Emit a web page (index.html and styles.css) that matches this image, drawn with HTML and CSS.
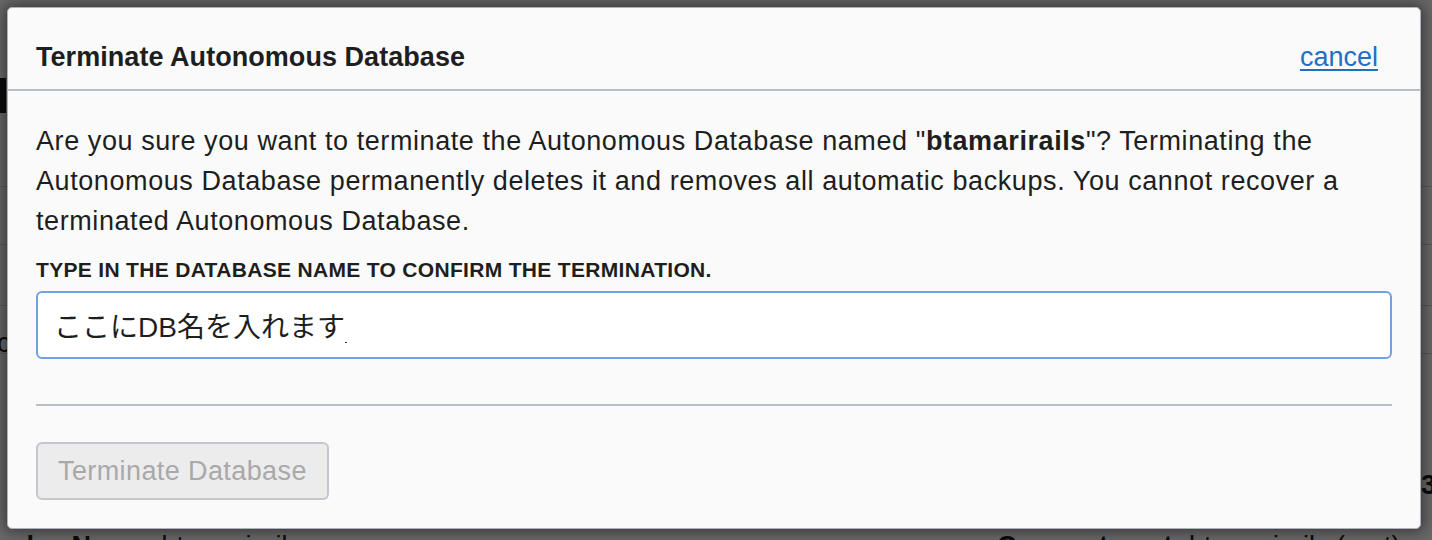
FILE: index.html
```html
<!DOCTYPE html>
<html lang="en">
<head>
<meta charset="utf-8">
<title>Terminate Autonomous Database</title>
<link rel="stylesheet" href="styles.css">
</head>
<body>
<div class="page">
  <div class="page-top"></div>
  <div class="page-hero"><div class="tile"></div></div>
  <div class="page-band band-a"></div>
  <div class="page-band band-b"><span class="frag frag-faint">o</span></div>
  <div class="page-band band-c"></div>
  <div class="page-band band-d"><span class="frag">nc</span></div>
  <div class="page-band band-e"><span class="frag">o</span><span class="frag-right">13:3</span></div>
  <div class="info">
    <div class="info-col"><b>Display Name:</b> btamarirails</div>
    <div class="info-col info-right"><b>Compartment:</b> btamarirails (root)</div>
  </div>
</div>

<div class="modal" role="dialog" aria-labelledby="dlg-title">
  <div class="modal-head">
    <h2 id="dlg-title" class="modal-title">Terminate Autonomous Database</h2>
    <a class="cancel" href="#">cancel</a>
  </div>
  <div class="modal-body">
    <p class="msg">Are you sure you want to terminate the Autonomous Database named "<b>btamarirails</b>"? Terminating the Autonomous Database permanently deletes it and removes all automatic backups. You cannot recover a terminated Autonomous Database.</p>
    <label class="field-label" for="dbname">TYPE IN THE DATABASE NAME TO CONFIRM THE TERMINATION.</label>
    <div class="field">
      <input id="dbname" class="field-input" type="text" value="ここにDB名を入れます">
      <span class="caret-dot"></span>
    </div>
    <hr class="sep">
    <button class="btn-terminate" type="button" disabled>Terminate Database</button>
  </div>
</div>
</body>
</html>
```

FILE: styles.css
```css
html, body {
  margin: 0;
  padding: 0;
}
body {
  width: 1432px;
  height: 540px;
  overflow: hidden;
  background: #686868;
  font-family: "Liberation Sans", Arial, "Noto Sans CJK JP", sans-serif;
  color: #1e1e1e;
  position: relative;
}

/* dimmed page behind the dialog */
.page {
  display: flex;
  flex-direction: column;
}
.page-top {
  height: 78px;
}
.page-hero {
  height: 35px;
  display: flex;
}
.tile {
  width: 100px;
  margin-left: -94px;
  background: #0c0c0c;
}
.page-band {
  box-sizing: border-box;
  border-bottom: 1px solid #585858;
  display: flex;
  align-items: center;
  justify-content: space-between;
}
.band-a { height: 74px; }
.band-b { height: 58px; padding-bottom: 14px; }
.band-c { height: 61px; }
.band-d { height: 48px; padding-top: 27px; }
.band-e {
  height: 172px;
  border-bottom: none;
  align-items: flex-end;
  padding-bottom: 26px;
}
.frag, .frag-right {
  font-size: 27px;
  line-height: 30px;
  color: #0c0c0c;
}
.frag { margin-left: -18px; }
.frag-faint { color: #5c5c5c; margin-left: -16px; }
.frag-right { margin-right: -28px; font-weight: bold; }
.info {
  display: flex;
  height: 40px;
  line-height: 40px;
  font-size: 27px;
  color: #0c0c0c;
}
.info-col {
  flex: none;
  margin-left: -32px;
  width: 1029px;
  white-space: nowrap;
}
.info-right {
  margin-left: 0;
  width: 500px;
}

/* dialog */
.modal {
  position: absolute;
  left: 7px;
  top: 7px;
  width: 1414px;
  height: 522px;
  box-sizing: border-box;
  border: 1px solid #aeb3bb;
  border-radius: 5px;
  background: #fafafa;
  box-shadow: 0 0 14px 3px rgba(0, 0, 0, 0.45);
  display: flex;
  flex-direction: column;
}
.modal-head {
  height: 83px;
  box-sizing: border-box;
  padding: 0 42px 16px 28px;
  display: flex;
  align-items: flex-end;
  justify-content: space-between;
  border-bottom: 2px solid #b9bec6;
}
.modal-title {
  margin: 0;
  font-size: 27px;
  line-height: 32px;
  font-weight: bold;
  letter-spacing: 0.05px;
  color: #1e1e1e;
}
.cancel {
  font-size: 27px;
  line-height: 32px;
  color: #1f6fc6;
  text-decoration: underline;
  text-underline-offset: 3px;
}
.modal-body {
  padding: 30px 28px 0;
  display: flex;
  flex-direction: column;
  align-items: flex-start;
}
.msg {
  margin: 0;
  font-size: 27px;
  line-height: 40px;
  letter-spacing: 0.58px;
  color: #1e1e1e;
}
.field-label {
  margin-top: 16px;
  font-size: 21px;
  line-height: 26px;
  font-weight: bold;
  letter-spacing: 0.32px;
  color: #1e1e1e;
}
.field {
  margin-top: 8px;
  width: 100%;
  position: relative;
}
.field-input {
  display: block;
  width: 100%;
  height: 68px;
  box-sizing: border-box;
  border: 2px solid #6fa2de;
  border-radius: 6px;
  background: #ffffff;
  padding: 0 16px;
  font-family: "Liberation Sans", Arial, "Noto Sans CJK JP", sans-serif;
  font-size: 28px;
  color: #1e1e1e;
  outline: none;
}
.caret-dot {
  position: absolute;
  left: 309px;
  top: 51px;
  width: 2px;
  height: 1px;
  background: #333;
}
.sep {
  width: 100%;
  margin: 45px 0 0;
  border: none;
  border-top: 2px solid #b9bec6;
  height: 0;
}
.btn-terminate {
  margin-top: 36px;
  height: 58px;
  padding: 0 20px;
  box-sizing: border-box;
  border: 2px solid #c3c6cc;
  border-radius: 6px;
  background: #ececec;
  font-family: "Liberation Sans", Arial, sans-serif;
  font-size: 27px;
  letter-spacing: 0.4px;
  color: #a9a9a9;
}
```
